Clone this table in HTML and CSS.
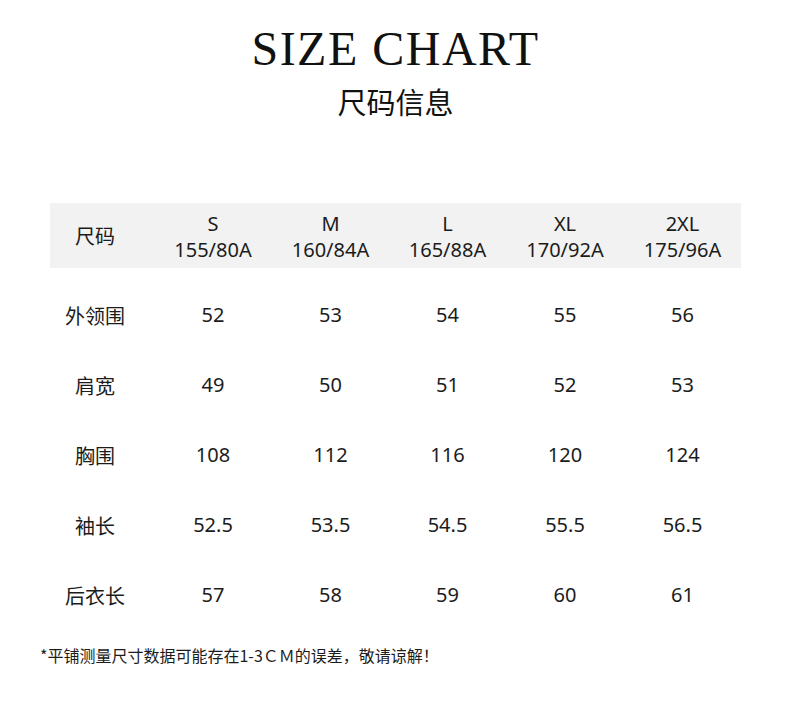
FILE: index.html
```html
<!DOCTYPE html>
<html lang="zh">
<head>
<meta charset="utf-8">
<title>Size Chart</title>
<link rel="stylesheet" href="styles.css">
</head>
<body>
<div class="page">
  <h1 class="title">SIZE CHART</h1>
  <div class="subtitle">尺码信息</div>

  <div class="row head">
    <div class="label">尺码</div>
    <div class="cell"><span>S</span><span>155/80A</span></div>
    <div class="cell"><span>M</span><span>160/84A</span></div>
    <div class="cell"><span>L</span><span>165/88A</span></div>
    <div class="cell"><span>XL</span><span>170/92A</span></div>
    <div class="cell"><span>2XL</span><span>175/96A</span></div>
  </div>

  <div class="body">
    <div class="row">
      <div class="label">外领围</div>
      <div class="cell">52</div><div class="cell">53</div><div class="cell">54</div><div class="cell">55</div><div class="cell">56</div>
    </div>
    <div class="row">
      <div class="label">肩宽</div>
      <div class="cell">49</div><div class="cell">50</div><div class="cell">51</div><div class="cell">52</div><div class="cell">53</div>
    </div>
    <div class="row">
      <div class="label">胸围</div>
      <div class="cell">108</div><div class="cell">112</div><div class="cell">116</div><div class="cell">120</div><div class="cell">124</div>
    </div>
    <div class="row">
      <div class="label">袖长</div>
      <div class="cell">52.5</div><div class="cell">53.5</div><div class="cell">54.5</div><div class="cell">55.5</div><div class="cell">56.5</div>
    </div>
    <div class="row">
      <div class="label">后衣长</div>
      <div class="cell">57</div><div class="cell">58</div><div class="cell">59</div><div class="cell">60</div><div class="cell">61</div>
    </div>
  </div>

  <p class="note">*平铺测量尺寸数据可能存在1-3ＣＭ的误差，敬请谅解！</p>
</div>
</body>
</html>
```

FILE: styles.css
```css
html, body {
  margin: 0;
  padding: 0;
  background: #ffffff;
}

.page {
  width: 790px;
  height: 706px;
  padding: 25px 49px 0 50px;
  box-sizing: border-box;
  font-family: "Noto Sans", "Noto Sans CJK SC", sans-serif;
  color: #1c1c1c;
}

.title {
  margin: 0;
  font-family: "Liberation Serif", "Times New Roman", serif;
  font-weight: normal;
  font-size: 48px;
  line-height: 48px;
  letter-spacing: 1.5px;
  text-align: center;
  color: #111111;
}

.subtitle {
  margin-top: 8px;
  font-family: "Noto Sans CJK SC", sans-serif;
  font-size: 29px;
  line-height: 40px;
  text-align: center;
  color: #111111;
}

.row {
  display: grid;
  grid-template-columns: 104px 118px 117px 117px 118px 117px;
  align-items: center;
  height: 70px;
  font-size: 20px;
}

.row.head {
  margin-top: 82px;
  height: 65px;
  background: #f2f2f2;
}

.label {
  font-family: "Noto Sans CJK SC", sans-serif;
  text-align: center;
  padding-right: 14px;
}

.cell {
  text-align: center;
  line-height: 26px;
}

.head .cell {
  display: flex;
  flex-direction: column;
  align-items: center;
  padding-top: 2px;
}

.body {
  margin-top: 12px;
}

.note {
  margin: 13px 0 0 -10px;
  font-family: "Noto Sans CJK SC", sans-serif;
  font-size: 16px;
  line-height: 24px;
  color: #1c1c1c;
}
```
